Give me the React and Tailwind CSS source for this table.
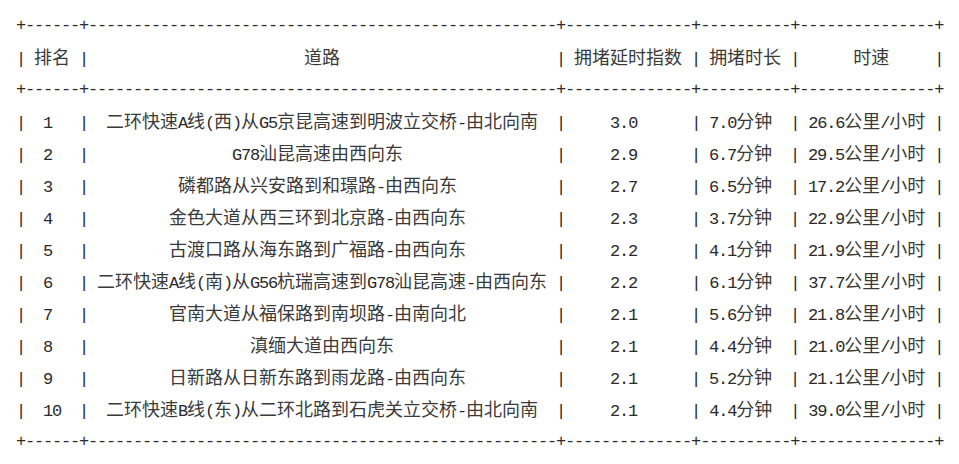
import React from "react";

const header = ["排名", "道路", "拥堵延时指数", "拥堵时长", "时速"];
const rows = [
  ["1", "二环快速A线(西)从G5京昆高速到明波立交桥-由北向南", "3.0", "7.0分钟", "26.6公里/小时"],
  ["2", "G78汕昆高速由西向东", "2.9", "6.7分钟", "29.5公里/小时"],
  ["3", "磷都路从兴安路到和璟路-由西向东", "2.7", "6.5分钟", "17.2公里/小时"],
  ["4", "金色大道从西三环到北京路-由西向东", "2.3", "3.7分钟", "22.9公里/小时"],
  ["5", "古渡口路从海东路到广福路-由西向东", "2.2", "4.1分钟", "21.9公里/小时"],
  ["6", "二环快速A线(南)从G56杭瑞高速到G78汕昆高速-由西向东", "2.2", "6.1分钟", "37.7公里/小时"],
  ["7", "官南大道从福保路到南坝路-由南向北", "2.1", "5.6分钟", "21.8公里/小时"],
  ["8", "滇缅大道由西向东", "2.1", "4.4分钟", "21.0公里/小时"],
  ["9", "日新路从日新东路到雨龙路-由西向东", "2.1", "5.2分钟", "21.1公里/小时"],
  ["10", "二环快速B线(东)从二环北路到石虎关立交桥-由北向南", "2.1", "4.4分钟", "39.0公里/小时"],
];

const isWide = (c) => c.charCodeAt(0) > 255;
const dw = (s) => {
  let n = 0;
  for (const c of s) n += isWide(c) ? 2 : 1;
  return n;
};

function center(text, width) {
  const tw = dw(text);
  const excess = width - tw;
  const half = Math.floor(excess / 2);
  if (excess % 2) {
    if (tw % 2) return " ".repeat(half) + text + " ".repeat(half + 1);
    return " ".repeat(half + 1) + text + " ".repeat(half);
  }
  return " ".repeat(half) + text + " ".repeat(half);
}

const widths = header.map((h, i) => Math.max(dw(h), ...rows.map((r) => dw(r[i]))));

const border = "+" + widths.map((w) => "-".repeat(w + 2)).join("+") + "+";
const makeLine = (cells) =>
  "|" + cells.map((c, i) => " " + center(c, widths[i]) + " ").join("|") + "|";

const lines = [border, makeLine(header), border, ...rows.map(makeLine), border];

function splitRuns(line) {
  const runs = [];
  let cur = "";
  let curWide = null;
  for (const c of line) {
    const w = isWide(c);
    if (curWide === null || w === curWide) {
      cur += c;
      curWide = w;
    } else {
      runs.push({ text: cur, wide: curWide });
      cur = c;
      curWide = w;
    }
  }
  if (cur) runs.push({ text: cur, wide: curWide });
  return runs;
}

function Line({ text }) {
  return (
    <div className="h-[32px] leading-[32px] whitespace-pre">
      {splitRuns(text).map((r, i) =>
        r.wide ? (
          <span
            key={i}
            className="text-[18px] font-['Noto_Sans_CJK_SC',sans-serif] text-[#3a3a3a]"
          >
            {r.text}
          </span>
        ) : (
          <span
            key={i}
            className="text-[17px] tracking-[-1.2px] font-['Liberation_Mono',monospace] text-[#2a2a2a]"
          >
            {r.text}
          </span>
        )
      )}
    </div>
  );
}

export default function App() {
  return (
    <div className="w-[959px] h-[464px] bg-white pt-[8px] pl-[16px] overflow-hidden">
      {lines.map((l, i) => (
        <Line key={i} text={l} />
      ))}
    </div>
  );
}
